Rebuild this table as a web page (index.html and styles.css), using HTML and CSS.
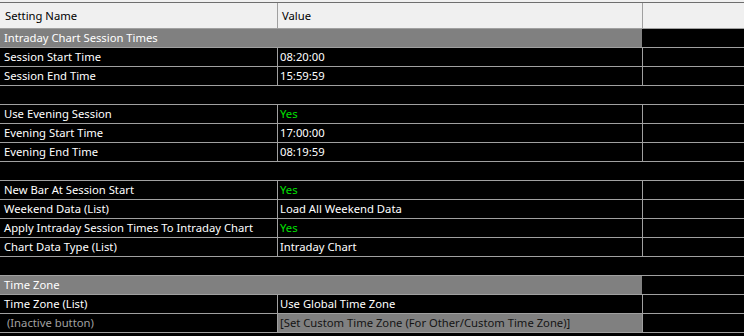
FILE: index.html
```html
<!doctype html>
<html lang="en">
<head>
    <meta charset="UTF-8">
    <meta name="viewport" content="width=device-width, initial-scale=1.0">
    <title>Chart Settings</title>
    <link rel="stylesheet" href="styles.css">
</head>
<body>
<div class="settings">
    <div class="head-wrap">
        <div class="row head">
            <div class="cell name">Setting Name</div>
            <div class="cell value">Value</div>
            <div class="cell extra"></div>
        </div>
    </div>

    <div class="row group">
        <div class="cell title">Intraday Chart Session Times</div>
        <div class="cell extra"></div>
    </div>
    <div class="row">
        <div class="cell name">Session Start Time</div>
        <div class="cell value">08:20:00</div>
        <div class="cell extra"></div>
    </div>
    <div class="row">
        <div class="cell name">Session End Time</div>
        <div class="cell value">15:59:59</div>
        <div class="cell extra"></div>
    </div>
    <div class="row blank"></div>

    <div class="row">
        <div class="cell name">Use Evening Session</div>
        <div class="cell value yes">Yes</div>
        <div class="cell extra"></div>
    </div>
    <div class="row">
        <div class="cell name">Evening Start Time</div>
        <div class="cell value">17:00:00</div>
        <div class="cell extra"></div>
    </div>
    <div class="row">
        <div class="cell name">Evening End Time</div>
        <div class="cell value">08:19:59</div>
        <div class="cell extra"></div>
    </div>
    <div class="row blank"></div>

    <div class="row">
        <div class="cell name">New Bar At Session Start</div>
        <div class="cell value yes">Yes</div>
        <div class="cell extra"></div>
    </div>
    <div class="row">
        <div class="cell name">Weekend Data (List)</div>
        <div class="cell value">Load All Weekend Data</div>
        <div class="cell extra"></div>
    </div>
    <div class="row">
        <div class="cell name">Apply Intraday Session Times To Intraday Chart</div>
        <div class="cell value yes">Yes</div>
        <div class="cell extra"></div>
    </div>
    <div class="row">
        <div class="cell name">Chart Data Type (List)</div>
        <div class="cell value">Intraday Chart</div>
        <div class="cell extra"></div>
    </div>
    <div class="row blank"></div>

    <div class="row group">
        <div class="cell title">Time Zone</div>
        <div class="cell extra"></div>
    </div>
    <div class="row">
        <div class="cell name">Time Zone (List)</div>
        <div class="cell value">Use Global Time Zone</div>
        <div class="cell extra"></div>
    </div>
    <div class="row inactive">
        <div class="cell name">&nbsp;(Inactive button)</div>
        <div class="cell value">[Set Custom Time Zone (For Other/Custom Time Zone)]</div>
        <div class="cell extra"></div>
    </div>
</div>
</body>
</html>
```

FILE: styles.css
```css
/* Settings grid */
body {
    margin: 0;
    background: #000;
    font-family: 'Noto Sans', sans-serif;
    font-size: 11.25px;
    color: #fff;
}

.settings {
    width: 744px;
}

.head-wrap {
    background: #f0f0f0;
    padding-top: 2px;
}

.row {
    display: grid;
    grid-template-columns: 277px 365px 1fr;
    height: 18px;
    line-height: 18px;
    border-bottom: 1px solid #a0a0a0;
    white-space: nowrap;
}

.cell {
    overflow: hidden;
}

.name {
    padding-left: 4px;
}

.value {
    padding-left: 2px;
    border-left: 1px solid #a0a0a0;
}

.extra {
    border-left: 1px solid #a0a0a0;
}

/* Column header */
.head {
    height: 25px;
    line-height: 25px;
    border-top: 1px solid #6e6e6e;
    background: #f0f0f0;
    color: #000;
}

.head .name {
    padding-left: 5px;
}

.head .value {
    padding-left: 4px;
}

/* Section title rows */
.group {
    grid-template-columns: 642px 1fr;
}

.group .title {
    background: #808080;
    padding-left: 4px;
}

.group .extra {
    border-left: none;
}

.blank {
    display: block;
}

.yes {
    color: #00e000;
}

.inactive .name {
    color: #a0a0a0;
}

.inactive .value {
    background: #808080;
    color: #141414;
}
```
